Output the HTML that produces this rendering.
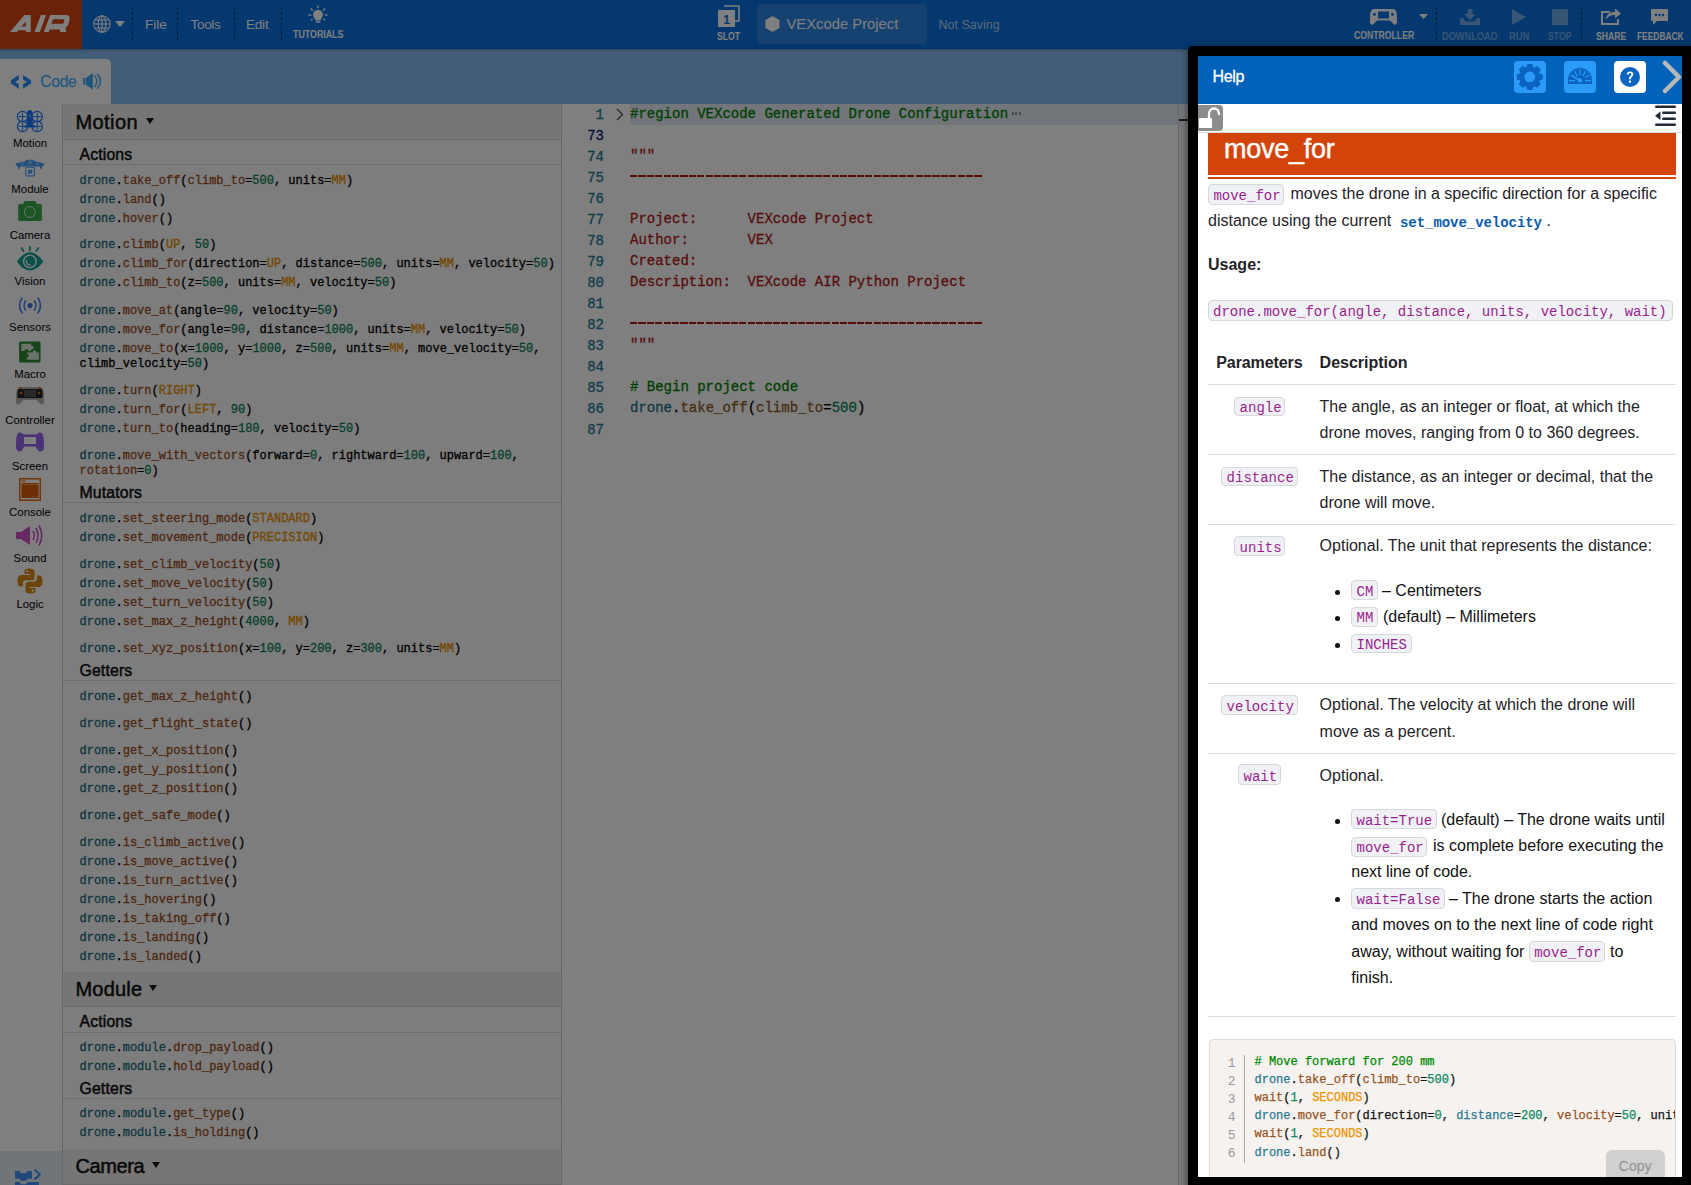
<!DOCTYPE html><html><head><meta charset="utf-8"><style>
html,body{margin:0;padding:0;}
body{width:1691px;height:1185px;overflow:hidden;position:relative;background:#fff;font-family:'Liberation Sans', sans-serif;}
</style></head><body>
<div style="position:absolute;left:0px;top:0px;width:1691px;height:49px;background:#0870de;"></div>
<div style="position:absolute;left:0px;top:0px;width:82px;height:49px;background:#d44410;"></div>
<svg style="position:absolute;left:0;top:0" width="82" height="49" viewBox="0 0 82 49">
<g fill="#ffffff" fill-rule="evenodd">
<path d="M9.9 32 L24.5 15.1 L30.7 15.1 L30.7 32 L25.8 32 L25.8 30.2 L18.3 30.2 L16.8 32 Z M21.2 26.6 L25.8 21.8 L25.8 26.6 Z"/>
<path d="M34.5 32 L40.9 15.1 L46 15.1 L39.8 32 Z"/>
<path d="M43.8 32 L50.2 15.1 L66.8 15.1 Q70.2 15.3 69.6 19.2 L68.6 23.8 Q67.9 26.6 65.6 27.4 L66.3 32 L60.1 32 L59.8 29.6 L49.6 29.6 L48.8 32 Z M53.1 19.3 L63.6 19.3 Q64.6 19.4 64.3 20.6 L63.8 22.6 Q63.5 23.7 62.4 23.7 L51.4 23.7 Z"/>
</g></svg>
<svg style="position:absolute;left:93px;top:15px" width="18" height="18" viewBox="0 0 18 18" fill="none" stroke="#fff" stroke-width="1.1">
<circle cx="9" cy="9" r="8.2"/><ellipse cx="9" cy="9" rx="3.8" ry="8.2"/><line x1="9" y1="0.8" x2="9" y2="17.2"/><line x1="0.8" y1="9" x2="17.2" y2="9"/><line x1="2" y1="5" x2="16" y2="5"/><line x1="2" y1="13" x2="16" y2="13"/></svg>
<svg style="position:absolute;left:115px;top:21px" width="10" height="6" viewBox="0 0 10 6"><path d="M0 0 L10 0 L5 6 Z" fill="#fff"/></svg>
<div style="position:absolute;left:132px;top:7px;width:1px;height:35px;background:repeating-linear-gradient(to bottom, rgba(0,0,0,0.45) 0 3px, transparent 3px 5px);"></div>
<div style="position:absolute;left:177px;top:7px;width:1px;height:35px;background:repeating-linear-gradient(to bottom, rgba(0,0,0,0.45) 0 3px, transparent 3px 5px);"></div>
<div style="position:absolute;left:234px;top:7px;width:1px;height:35px;background:repeating-linear-gradient(to bottom, rgba(0,0,0,0.45) 0 3px, transparent 3px 5px);"></div>
<div style="position:absolute;left:281px;top:7px;width:1px;height:35px;background:repeating-linear-gradient(to bottom, rgba(0,0,0,0.45) 0 3px, transparent 3px 5px);"></div>
<div style="position:absolute;left:145px;top:17.53px;font-family:'Liberation Sans', sans-serif;font-size:13.5px;line-height:13.5px;color:#fff;font-weight:normal;white-space:pre;">File</div>
<div style="position:absolute;left:190.5px;top:17.53px;font-family:'Liberation Sans', sans-serif;font-size:13.5px;line-height:13.5px;color:#fff;font-weight:normal;white-space:pre;letter-spacing:-0.3px;">Tools</div>
<div style="position:absolute;left:246px;top:17.53px;font-family:'Liberation Sans', sans-serif;font-size:13.5px;line-height:13.5px;color:#fff;font-weight:normal;white-space:pre;letter-spacing:-0.2px;">Edit</div>
<svg style="position:absolute;left:308px;top:5px" width="20" height="19" viewBox="0 0 20 19" fill="#fff">
<path d="M10 5 C6.8 5 5 7.3 5 9.8 C5 11.8 6.3 13 7.2 14 L7.2 15.5 L12.8 15.5 L12.8 14 C13.7 13 15 11.8 15 9.8 C15 7.3 13.2 5 10 5 Z"/>
<rect x="7.5" y="16.3" width="5" height="1.5" rx="0.7"/>
<rect x="9.3" y="0.5" width="1.4" height="2.8"/><rect x="0.5" y="9.3" width="2.8" height="1.4"/><rect x="16.7" y="9.3" width="2.8" height="1.4"/>
<rect x="3" y="3.2" width="1.4" height="2.6" transform="rotate(-45 3.7 4.5)"/><rect x="15.6" y="3.2" width="1.4" height="2.6" transform="rotate(45 16.3 4.5)"/>
<rect x="3" y="13.5" width="1.4" height="2.2" transform="rotate(45 3.7 14.6)"/><rect x="15.6" y="13.5" width="1.4" height="2.2" transform="rotate(-45 16.3 14.6)"/>
</svg>
<div style="position:absolute;left:293.1px;top:30.08px;font-family:'Liberation Sans', sans-serif;font-size:10px;line-height:10px;color:#fff;font-weight:bold;white-space:pre;transform:scaleX(0.884);transform-origin:0 0;">TUTORIALS</div>
<svg style="position:absolute;left:718px;top:5px" width="22" height="23" viewBox="0 0 22 23">
<path d="M6 1 L21 1 L21 16 L17 16" fill="none" stroke="#fff" stroke-width="1.6"/>
<rect x="0" y="5" width="17" height="17" fill="#fff"/>
<text x="8.5" y="19" font-family="Liberation Sans" font-weight="bold" font-size="12" text-anchor="middle" fill="#0870de">1</text></svg>
<div style="position:absolute;left:717.1px;top:32.08px;font-family:'Liberation Sans', sans-serif;font-size:10px;line-height:10px;color:#fff;font-weight:bold;white-space:pre;transform:scaleX(0.866);transform-origin:0 0;">SLOT</div>
<div style="position:absolute;left:757px;top:4px;width:170px;height:40px;background:rgba(255,255,255,0.14);border-radius:5px;"></div>
<svg style="position:absolute;left:765px;top:16px" width="15" height="16" viewBox="0 0 15 16"><path d="M7.5 0 L14.5 4 L14.5 12 L7.5 16 L0.5 12 L0.5 4 Z" fill="#fff"/></svg>
<div style="position:absolute;left:786.5px;top:17.27px;font-family:'Liberation Sans', sans-serif;font-size:14.8px;line-height:14.8px;color:#fff;font-weight:normal;white-space:pre;">VEXcode Project</div>
<div style="position:absolute;left:938.5px;top:18.84px;font-family:'Liberation Sans', sans-serif;font-size:12.5px;line-height:12.5px;color:rgba(255,255,255,0.72);font-weight:normal;white-space:pre;">Not Saving</div>
<svg style="position:absolute;left:1370px;top:8px" width="27" height="17" viewBox="0 0 27 17" fill="#fff">
<path d="M4 1 L23 1 C25 1 26.5 3 26.8 6 L27 14 C27 16 25.5 17 24 16.5 L20 12.5 L7 12.5 L3 16.5 C1.5 17 0 16 0 14 L0.2 6 C0.5 3 2 1 4 1 Z"/>
<rect x="8" y="3.5" width="11" height="7" fill="#0870de"/>
<circle cx="4.5" cy="6.5" r="1.4" fill="#0870de"/><circle cx="22.5" cy="6.5" r="1.4" fill="#0870de"/>
</svg>
<svg style="position:absolute;left:1419px;top:14px" width="9" height="5" viewBox="0 0 9 5"><path d="M0 0 L9 0 L4.5 5 Z" fill="#fff"/></svg>
<div style="position:absolute;left:1354.0px;top:31.48px;font-family:'Liberation Sans', sans-serif;font-size:10px;line-height:10px;color:#fff;font-weight:bold;white-space:pre;transform:scaleX(0.867);transform-origin:0 0;">CONTROLLER</div>
<div style="position:absolute;left:1436px;top:7px;width:1px;height:35px;background:repeating-linear-gradient(to bottom, rgba(0,0,0,0.45) 0 3px, transparent 3px 5px);"></div>
<div style="position:absolute;left:1581px;top:7px;width:1px;height:35px;background:repeating-linear-gradient(to bottom, rgba(0,0,0,0.45) 0 3px, transparent 3px 5px);"></div>
<svg style="position:absolute;left:1460px;top:9px" width="20" height="16" viewBox="0 0 20 16" fill="rgba(255,255,255,0.42)">
<path d="M7.5 0 L12.5 0 L12.5 5 L16 5 L10 11 L4 5 L7.5 5 Z"/><path d="M0 9 L3 9 L5.5 12.5 L14.5 12.5 L17 9 L20 9 L20 16 L0 16 Z"/></svg>
<div style="position:absolute;left:1442.2px;top:32.08px;font-family:'Liberation Sans', sans-serif;font-size:10px;line-height:10px;color:rgba(255,255,255,0.42);font-weight:bold;white-space:pre;transform:scaleX(0.922);transform-origin:0 0;">DOWNLOAD</div>
<svg style="position:absolute;left:1512px;top:9px" width="14" height="16" viewBox="0 0 14 16"><path d="M0 0 L14 8 L0 16 Z" fill="rgba(255,255,255,0.42)"/></svg>
<div style="position:absolute;left:1509.1px;top:32.08px;font-family:'Liberation Sans', sans-serif;font-size:10px;line-height:10px;color:rgba(255,255,255,0.42);font-weight:bold;white-space:pre;transform:scaleX(0.941);transform-origin:0 0;">RUN</div>
<div style="position:absolute;left:1552px;top:9px;width:16px;height:16px;background:rgba(255,255,255,0.42);"></div>
<div style="position:absolute;left:1548.1px;top:32.08px;font-family:'Liberation Sans', sans-serif;font-size:10px;line-height:10px;color:rgba(255,255,255,0.42);font-weight:bold;white-space:pre;transform:scaleX(0.865);transform-origin:0 0;">STOP</div>
<svg style="position:absolute;left:1601px;top:7px" width="21" height="18" viewBox="0 0 21 18" fill="none" stroke="#fff" stroke-width="2">
<path d="M9 5 L1 5 L1 17 L17 17 L17 12"/><path d="M5 13 C5 7 9 5 14 5 L14 1.5 L20 6.5 L14 11.5 L14 8 C10 8 7 9 5 13 Z" fill="#fff" stroke="none"/></svg>
<div style="position:absolute;left:1596.2px;top:32.08px;font-family:'Liberation Sans', sans-serif;font-size:10px;line-height:10px;color:#fff;font-weight:bold;white-space:pre;transform:scaleX(0.866);transform-origin:0 0;">SHARE</div>
<svg style="position:absolute;left:1651px;top:9px" width="17" height="16" viewBox="0 0 17 16">
<path d="M1 0 L16 0 C16.6 0 17 0.4 17 1 L17 11 C17 11.6 16.6 12 16 12 L6 12 L2 16 L2 12 L1 12 C0.4 12 0 11.6 0 11 L0 1 C0 0.4 0.4 0 1 0 Z" fill="#fff"/>
<circle cx="5" cy="6" r="1.2" fill="#0870de"/><circle cx="8.5" cy="6" r="1.2" fill="#0870de"/><circle cx="12" cy="6" r="1.2" fill="#0870de"/></svg>
<div style="position:absolute;left:1636.9px;top:32.08px;font-family:'Liberation Sans', sans-serif;font-size:10px;line-height:10px;color:#fff;font-weight:bold;white-space:pre;transform:scaleX(0.839);transform-origin:0 0;">FEEDBACK</div>
<div style="position:absolute;left:0px;top:49px;width:1691px;height:55px;background:#85baf0;"></div>
<div style="position:absolute;left:0px;top:49px;width:1691px;height:3px;background:linear-gradient(rgba(0,0,0,0.25),rgba(0,0,0,0));"></div>
<div style="position:absolute;left:0px;top:59px;width:111px;height:45px;background:#fff;border-radius:0 5px 0 0;"></div>
<svg style="position:absolute;left:0;top:60px" width="40" height="40" viewBox="0 60 40 40" fill="#2590fa">
<path d="M18.8 75.1 L11 80.2 L11 83.6 L18.8 88.7 L18.8 84.2 L15.1 82 L18.8 79.7 Z"/><path d="M23.1 75.1 L31 80.2 L31 83.6 L23.1 88.7 L23.1 84.2 L26.8 82 L23.1 79.7 Z"/></svg>
<div style="position:absolute;left:40.3px;top:73.53px;font-family:'Liberation Sans', sans-serif;font-size:15.6px;line-height:15.6px;color:#44b0ff;font-weight:normal;white-space:pre;letter-spacing:-0.3px;-webkit-text-stroke:0.25px #44b0ff;">Code</div>
<svg style="position:absolute;left:80px;top:70px" width="24" height="22" viewBox="80 70 24 22">
<rect x="83" y="77.9" width="2.3" height="6.9" fill="#44b0ff"/>
<path d="M85.9 77.9 L92.9 73 L92.9 89.8 L85.9 84.8 Z" fill="#40a8f8"/>
<path d="M94.9 75.9 Q98.8 81.2 94.9 86.6" fill="none" stroke="#44b0ff" stroke-width="1.6" stroke-linecap="round"/>
<path d="M97.6 74.2 Q103.2 81.2 97.6 88.3" fill="none" stroke="#44b0ff" stroke-width="1.6" stroke-linecap="round"/></svg>
<div style="position:absolute;left:0px;top:104px;width:62px;height:1081px;background:#fff;"></div>
<div style="position:absolute;left:0px;top:1151px;width:62px;height:34px;background:#e0eaf4;"></div>
<div style="position:absolute;left:0;width:60px;text-align:center;top:138.04px;font-size:11.4px;line-height:11.4px;color:#000;white-space:pre">Motion</div>
<div style="position:absolute;left:0;width:60px;text-align:center;top:183.74px;font-size:11.4px;line-height:11.4px;color:#000;white-space:pre">Module</div>
<div style="position:absolute;left:0;width:60px;text-align:center;top:229.74px;font-size:11.4px;line-height:11.4px;color:#000;white-space:pre">Camera</div>
<div style="position:absolute;left:0;width:60px;text-align:center;top:275.74px;font-size:11.4px;line-height:11.4px;color:#000;white-space:pre">Vision</div>
<div style="position:absolute;left:0;width:60px;text-align:center;top:321.74px;font-size:11.4px;line-height:11.4px;color:#000;white-space:pre">Sensors</div>
<div style="position:absolute;left:0;width:60px;text-align:center;top:368.54px;font-size:11.4px;line-height:11.4px;color:#000;white-space:pre">Macro</div>
<div style="position:absolute;left:0;width:60px;text-align:center;top:414.54px;font-size:11.4px;line-height:11.4px;color:#000;white-space:pre">Controller</div>
<div style="position:absolute;left:0;width:60px;text-align:center;top:460.54px;font-size:11.4px;line-height:11.4px;color:#000;white-space:pre">Screen</div>
<div style="position:absolute;left:0;width:60px;text-align:center;top:506.74px;font-size:11.4px;line-height:11.4px;color:#000;white-space:pre">Console</div>
<div style="position:absolute;left:0;width:60px;text-align:center;top:552.74px;font-size:11.4px;line-height:11.4px;color:#000;white-space:pre">Sound</div>
<div style="position:absolute;left:0;width:60px;text-align:center;top:598.74px;font-size:11.4px;line-height:11.4px;color:#000;white-space:pre">Logic</div>
<svg style="position:absolute;left:15px;top:108px" width="30" height="26" viewBox="15 108 30 26" fill="none" stroke="#1878ff" stroke-width="1.2">
<circle cx="22.6" cy="116.6" r="5.2"/><circle cx="37.2" cy="116.6" r="5.2"/><circle cx="22.6" cy="126.4" r="5.2"/><circle cx="37.2" cy="126.4" r="5.2"/>
<path d="M18.5 116.6 L26.7 116.6 M22.6 112.5 L22.6 120.7 M33.1 116.6 L41.3 116.6 M37.2 112.5 L37.2 120.7 M18.5 126.4 L26.7 126.4 M22.6 122.3 L22.6 130.5 M33.1 126.4 L41.3 126.4 M37.2 122.3 L37.2 130.5" stroke-width="1"/>
<path d="M29.9 110 C31.9 110 32.8 112 32.8 114 L32.8 124.5 L35.5 126 L35.5 127.6 L24.3 127.6 L24.3 126 L27 124.5 L27 114 C27 112 27.9 110 29.9 110 Z" fill="#1878ff" stroke="none"/>
<rect x="29.2" y="114.5" width="1.4" height="2.4" fill="#8ab8ff" stroke="none"/></svg>
<svg style="position:absolute;left:14px;top:157px" width="32" height="22" viewBox="14 157 32 22" fill="#4aa0f8">
<path d="M15.8 163.3 L21 162.2 L24.5 161.5 L27 159.7 L33 159.7 L35.5 161.5 L39 162.2 L43.9 163.3 L43.9 165.2 L42.2 166.2 L41.6 169.2 L40.4 169.2 L39.8 166.5 L20.2 166.5 L19.6 169.2 L18.4 169.2 L17.8 166.2 L15.8 165.2 Z"/>
<rect x="28.7" y="160.6" width="1" height="3.6" fill="#b8dcff"/><rect x="30.4" y="160.6" width="1" height="3.6" fill="#b8dcff"/>
<rect x="21.5" y="163.2" width="2.2" height="1.3" fill="#b8dcff"/><rect x="36.3" y="163.2" width="2.2" height="1.3" fill="#b8dcff"/>
<rect x="25.8" y="167.3" width="8.6" height="8.6" rx="1" fill="none" stroke="#4aa0f8" stroke-width="1.1"/>
<rect x="28" y="169.6" width="4.2" height="4.1"/></svg>
<svg style="position:absolute;left:17px;top:200px" width="26" height="22" viewBox="17 200 26 22">
<path d="M24.5 201 L35.5 201 L36.7 204 L40.3 204 Q41.8 204 41.8 205.5 L41.8 219.4 Q41.8 220.9 40.3 220.9 L19.7 220.9 Q18.2 220.9 18.2 219.4 L18.2 205.5 Q18.2 204 19.7 204 L23.3 204 Z" fill="#38a84c"/>
<circle cx="29.8" cy="212" r="5.4" fill="none" stroke="#e6f0e6" stroke-width="0.9"/><circle cx="38.3" cy="206.6" r="0.6" fill="#e6f0e6"/></svg>
<svg style="position:absolute;left:15px;top:245px" width="30" height="27" viewBox="15 245 30 27">
<g stroke="#16a090" stroke-width="1.7" stroke-linecap="round"><line x1="29.9" y1="246.5" x2="29.9" y2="250.5"/><line x1="21.5" y1="248" x2="23.5" y2="251"/><line x1="38.3" y1="248" x2="36.3" y2="251"/></g>
<path d="M16.9 261.4 Q29.9 243 43.3 261.4 Q29.9 279.8 16.9 261.4 Z" fill="#16a090"/>
<circle cx="29.9" cy="261.4" r="7" fill="#fff"/><circle cx="29.9" cy="261.4" r="5.6" fill="#16a090"/>
<path d="M26.6 260.2 A3.6 3.6 0 0 0 30.6 265" fill="none" stroke="#fff" stroke-width="1.3"/></svg>
<svg style="position:absolute;left:18px;top:297px" width="24" height="17" viewBox="0 0 24 17" fill="none" stroke="#3b7be8" stroke-width="1.6" stroke-linecap="round">
<circle cx="12" cy="8.5" r="2.6" fill="#3b7be8" stroke="none"/>
<path d="M7.5 4 C5.8 6.5 5.8 10.5 7.5 13"/><path d="M16.5 4 C18.2 6.5 18.2 10.5 16.5 13"/>
<path d="M4 1 C0.8 5 0.8 12 4 16"/><path d="M20 1 C23.2 5 23.2 12 20 16"/></svg>
<svg style="position:absolute;left:18px;top:340px" width="24" height="24" viewBox="18 340 24 24">
<rect x="19.1" y="341.5" width="21.4" height="20.9" rx="1.5" fill="#2c8a36"/>
<path d="M21.3 343.7 L31 343.7 L31 345.6 A2 2 0 1 1 31 349.4 L31 351 L28.5 351 A2 2 0 1 0 24.5 351 L21.3 351 Z" fill="#d6e6d6"/>
<path d="M26.8 352.5 L32.5 352.5 A2 2 0 1 1 36.5 352.5 L38.9 352.5 L38.9 359.8 L26.8 359.8 L26.8 357.5 A2 2 0 1 0 26.8 353.5 Z" fill="#d6e6d6"/></svg>
<svg style="position:absolute;left:16px;top:386px" width="28" height="19" viewBox="0 0 28 19">
<path d="M4 1 L24 1 C26 1 27.5 3 27.8 6.5 L28 15.5 C28 18 26 19 24.5 18 L20.5 14 L7.5 14 L3.5 18 C2 19 0 18 0 15.5 L0.2 6.5 C0.5 3 2 1 4 1 Z" fill="#b0b0b0"/>
<path d="M3 3 L25 3 C26 3 26.5 4.5 26.5 6 L26.5 12 L1.5 12 L1.5 6 C1.5 4.5 2 3 3 3 Z" fill="#222"/>
<rect x="8" y="4" width="12" height="7" fill="#555"/>
<rect x="3" y="1" width="3" height="1.5" fill="#e07020"/><rect x="22" y="1" width="3" height="1.5" fill="#e07020"/>
<circle cx="5" cy="7" r="1.3" fill="#e07020"/><circle cx="23" cy="7" r="1.3" fill="#e07020"/></svg>
<svg style="position:absolute;left:16px;top:432px" width="28" height="20" viewBox="0 0 28 20">
<path d="M4 0.5 C6 0.5 7 2.5 8.5 2.5 L19.5 2.5 C21 2.5 22 0.5 24 0.5 C26.5 0.5 27.5 3 27.8 8 L28 15 C28 18.5 26 19.5 24 19.5 C21.5 19.5 20.5 14.5 19 14.5 L9 14.5 C7.5 14.5 6.5 19.5 4 19.5 C2 19.5 0 18.5 0 15 L0.2 8 C0.5 3 1.5 0.5 4 0.5 Z" fill="#9464ec"/>
<rect x="8" y="5" width="12" height="7" fill="#fff"/></svg>
<svg style="position:absolute;left:19px;top:478px" width="22" height="23" viewBox="0 0 22 23">
<rect x="0.75" y="0.75" width="20.5" height="21.5" fill="none" stroke="#e06a10" stroke-width="1.5"/>
<rect x="2.5" y="2.5" width="4" height="1.3" fill="#e06a10"/>
<rect x="2.5" y="5" width="17" height="15" fill="#d85a08"/>
<rect x="3.5" y="6" width="15" height="1" fill="#f0a060"/><rect x="12" y="17.8" width="2.5" height="1" fill="#f0a060"/><rect x="15.5" y="17.8" width="2.5" height="1" fill="#f0a060"/></svg>
<svg style="position:absolute;left:16px;top:525px" width="27" height="21" viewBox="0 0 27 21">
<path d="M0 7 L5 7 L14 1 L14 20 L5 14 L0 14 Z" fill="#d050c8"/>
<path d="M17 6 Q19.5 10.5 17 15" fill="none" stroke="#d050c8" stroke-width="1.6"/>
<path d="M20 3 Q24 10.5 20 18" fill="none" stroke="#d050c8" stroke-width="1.6"/>
<path d="M23 0.5 Q28.5 10.5 23 20.5" fill="none" stroke="#d050c8" stroke-width="1.6"/></svg>
<svg style="position:absolute;left:17px;top:568px" width="26" height="26" viewBox="0 0 26 26">
<path d="M12.5 0.5 C7 0.5 7.5 3 7.5 3 L7.5 6 L13 6 L13 7 L4 7 C4 7 0.5 6.8 0.5 12.8 C0.5 18.8 3.7 18.5 3.7 18.5 L6 18.5 L6 15.5 C6 15.5 5.8 12.3 9 12.3 L14.5 12.3 C14.5 12.3 17.5 12.4 17.5 9.4 L17.5 3.5 C17.5 3.5 18 0.5 12.5 0.5 Z" fill="#d68a10"/>
<circle cx="10.2" cy="3.3" r="1.1" fill="#fff"/>
<path d="M13.5 25.5 C19 25.5 18.5 23 18.5 23 L18.5 20 L13 20 L13 19 L22 19 C22 19 25.5 19.2 25.5 13.2 C25.5 7.2 22.3 7.5 22.3 7.5 L20 7.5 L20 10.5 C20 10.5 20.2 13.7 17 13.7 L11.5 13.7 C11.5 13.7 8.5 13.6 8.5 16.6 L8.5 22.5 C8.5 22.5 8 25.5 13.5 25.5 Z" fill="#d68a10"/>
<circle cx="15.8" cy="22.7" r="1.1" fill="#fff"/></svg>
<svg style="position:absolute;left:10px;top:1165px" width="40" height="20" viewBox="10 1165 40 20" fill="#3e90f8">
<path d="M15 1171 L19.8 1171 L21 1173.2 L26 1173.2 L27.2 1171 L31.9 1171 L31.9 1178.8 L27.5 1178.8 L26.3 1180.8 L20.7 1180.8 L19.5 1178.8 L15 1178.8 Z"/>
<path d="M15 1182 L19.8 1182 L21 1184.2 L26 1184.2 L27.2 1182 L39 1182 L39 1190 L15 1190 Z"/>
<path d="M35.2 1170.2 L39.8 1174.5 L35.2 1178.8" fill="none" stroke="#3e90f8" stroke-width="2.2" stroke-linecap="round" stroke-linejoin="round"/></svg>
<div style="position:absolute;left:62px;top:104px;width:500px;height:1081px;background:#fbfbfb;border-left:1px solid #cfcfcf;border-right:1px solid #cfcfcf;box-sizing:border-box;"></div>
<div style="position:absolute;left:62px;top:104px;width:500px;height:36px;background:#ececec;border-left:1px solid #cfcfcf;border-right:1px solid #cfcfcf;border-bottom:1px solid #d6d6d6;box-sizing:border-box;"></div>
<div style="position:absolute;left:75.5px;top:112.05px;font-family:'Liberation Sans', sans-serif;font-size:20px;line-height:20px;color:#111;font-weight:normal;white-space:pre;-webkit-text-stroke:0.5px #111;letter-spacing:0.4px;">Motion</div>
<svg style="position:absolute;left:145.5px;top:118.30000000000001px" width="8" height="6" viewBox="0 0 8 6"><path d="M0 0 L8 0 L4 6 Z" fill="#111"/></svg>
<div style="position:absolute;left:79.5px;top:146.76px;font-family:'Liberation Sans', sans-serif;font-size:15.8px;line-height:15.8px;color:#111;font-weight:normal;white-space:pre;-webkit-text-stroke:0.5px #111;letter-spacing:0.15px;">Actions</div>
<div style="position:absolute;left:63px;top:164px;width:498px;height:1px;background:#dadada;"></div>
<div style="position:absolute;left:79.5px;top:174.60px;font-family:'Liberation Mono', monospace;font-size:12px;line-height:12px;color:#000;font-weight:normal;white-space:pre;-webkit-text-stroke-width:0.3px;"><span style="color:#1a6c7c">drone</span>.<span style="color:#9a4e1e">take_off</span>(<span style="color:#9a4e1e">climb_to</span>=<span style="color:#0a7f55">500</span>, units=<span style="color:#e89000">MM</span>)</div>
<div style="position:absolute;left:79.5px;top:193.70px;font-family:'Liberation Mono', monospace;font-size:12px;line-height:12px;color:#000;font-weight:normal;white-space:pre;-webkit-text-stroke-width:0.3px;"><span style="color:#1a6c7c">drone</span>.<span style="color:#9a4e1e">land</span>()</div>
<div style="position:absolute;left:79.5px;top:212.70px;font-family:'Liberation Mono', monospace;font-size:12px;line-height:12px;color:#000;font-weight:normal;white-space:pre;-webkit-text-stroke-width:0.3px;"><span style="color:#1a6c7c">drone</span>.<span style="color:#9a4e1e">hover</span>()</div>
<div style="position:absolute;left:79.5px;top:239.20px;font-family:'Liberation Mono', monospace;font-size:12px;line-height:12px;color:#000;font-weight:normal;white-space:pre;-webkit-text-stroke-width:0.3px;"><span style="color:#1a6c7c">drone</span>.<span style="color:#9a4e1e">climb</span>(<span style="color:#e89000">UP</span>, <span style="color:#0a7f55">50</span>)</div>
<div style="position:absolute;left:79.5px;top:258.30px;font-family:'Liberation Mono', monospace;font-size:12px;line-height:12px;color:#000;font-weight:normal;white-space:pre;-webkit-text-stroke-width:0.3px;"><span style="color:#1a6c7c">drone</span>.<span style="color:#9a4e1e">climb_for</span>(direction=<span style="color:#e89000">UP</span>, distance=<span style="color:#0a7f55">500</span>, units=<span style="color:#e89000">MM</span>, velocity=<span style="color:#0a7f55">50</span>)</div>
<div style="position:absolute;left:79.5px;top:277.30px;font-family:'Liberation Mono', monospace;font-size:12px;line-height:12px;color:#000;font-weight:normal;white-space:pre;-webkit-text-stroke-width:0.3px;"><span style="color:#1a6c7c">drone</span>.<span style="color:#9a4e1e">climb_to</span>(z=<span style="color:#0a7f55">500</span>, units=<span style="color:#e89000">MM</span>, velocity=<span style="color:#0a7f55">50</span>)</div>
<div style="position:absolute;left:79.5px;top:304.50px;font-family:'Liberation Mono', monospace;font-size:12px;line-height:12px;color:#000;font-weight:normal;white-space:pre;-webkit-text-stroke-width:0.3px;"><span style="color:#1a6c7c">drone</span>.<span style="color:#9a4e1e">move_at</span>(angle=<span style="color:#0a7f55">90</span>, velocity=<span style="color:#0a7f55">50</span>)</div>
<div style="position:absolute;left:79.5px;top:323.80px;font-family:'Liberation Mono', monospace;font-size:12px;line-height:12px;color:#000;font-weight:normal;white-space:pre;-webkit-text-stroke-width:0.3px;"><span style="color:#1a6c7c">drone</span>.<span style="color:#9a4e1e">move_for</span>(angle=<span style="color:#0a7f55">90</span>, distance=<span style="color:#0a7f55">1000</span>, units=<span style="color:#e89000">MM</span>, velocity=<span style="color:#0a7f55">50</span>)</div>
<div style="position:absolute;left:79.5px;top:342.80px;font-family:'Liberation Mono', monospace;font-size:12px;line-height:12px;color:#000;font-weight:normal;white-space:pre;-webkit-text-stroke-width:0.3px;"><span style="color:#1a6c7c">drone</span>.<span style="color:#9a4e1e">move_to</span>(x=<span style="color:#0a7f55">1000</span>, y=<span style="color:#0a7f55">1000</span>, z=<span style="color:#0a7f55">500</span>, units=<span style="color:#e89000">MM</span>, move_velocity=<span style="color:#0a7f55">50</span>,</div>
<div style="position:absolute;left:79.5px;top:357.90px;font-family:'Liberation Mono', monospace;font-size:12px;line-height:12px;color:#000;font-weight:normal;white-space:pre;-webkit-text-stroke-width:0.3px;">climb_velocity=<span style="color:#0a7f55">50</span>)</div>
<div style="position:absolute;left:79.5px;top:385.00px;font-family:'Liberation Mono', monospace;font-size:12px;line-height:12px;color:#000;font-weight:normal;white-space:pre;-webkit-text-stroke-width:0.3px;"><span style="color:#1a6c7c">drone</span>.<span style="color:#9a4e1e">turn</span>(<span style="color:#e89000">RIGHT</span>)</div>
<div style="position:absolute;left:79.5px;top:404.00px;font-family:'Liberation Mono', monospace;font-size:12px;line-height:12px;color:#000;font-weight:normal;white-space:pre;-webkit-text-stroke-width:0.3px;"><span style="color:#1a6c7c">drone</span>.<span style="color:#9a4e1e">turn_for</span>(<span style="color:#e89000">LEFT</span>, <span style="color:#0a7f55">90</span>)</div>
<div style="position:absolute;left:79.5px;top:422.70px;font-family:'Liberation Mono', monospace;font-size:12px;line-height:12px;color:#000;font-weight:normal;white-space:pre;-webkit-text-stroke-width:0.3px;"><span style="color:#1a6c7c">drone</span>.<span style="color:#9a4e1e">turn_to</span>(heading=<span style="color:#0a7f55">180</span>, velocity=<span style="color:#0a7f55">50</span>)</div>
<div style="position:absolute;left:79.5px;top:449.90px;font-family:'Liberation Mono', monospace;font-size:12px;line-height:12px;color:#000;font-weight:normal;white-space:pre;-webkit-text-stroke-width:0.3px;"><span style="color:#1a6c7c">drone</span>.<span style="color:#9a4e1e">move_with_vectors</span>(forward=<span style="color:#0a7f55">0</span>, rightward=<span style="color:#0a7f55">100</span>, upward=<span style="color:#0a7f55">100</span>,</div>
<div style="position:absolute;left:79.5px;top:465.00px;font-family:'Liberation Mono', monospace;font-size:12px;line-height:12px;color:#000;font-weight:normal;white-space:pre;-webkit-text-stroke-width:0.3px;"><span style="color:#9a4e1e">rotation</span>=<span style="color:#0a7f55">0</span>)</div>
<div style="position:absolute;left:79.5px;top:512.70px;font-family:'Liberation Mono', monospace;font-size:12px;line-height:12px;color:#000;font-weight:normal;white-space:pre;-webkit-text-stroke-width:0.3px;"><span style="color:#1a6c7c">drone</span>.<span style="color:#9a4e1e">set_steering_mode</span>(<span style="color:#e89000">STANDARD</span>)</div>
<div style="position:absolute;left:79.5px;top:531.70px;font-family:'Liberation Mono', monospace;font-size:12px;line-height:12px;color:#000;font-weight:normal;white-space:pre;-webkit-text-stroke-width:0.3px;"><span style="color:#1a6c7c">drone</span>.<span style="color:#9a4e1e">set_movement_mode</span>(<span style="color:#e89000">PRECISION</span>)</div>
<div style="position:absolute;left:79.5px;top:558.90px;font-family:'Liberation Mono', monospace;font-size:12px;line-height:12px;color:#000;font-weight:normal;white-space:pre;-webkit-text-stroke-width:0.3px;"><span style="color:#1a6c7c">drone</span>.<span style="color:#9a4e1e">set_climb_velocity</span>(<span style="color:#0a7f55">50</span>)</div>
<div style="position:absolute;left:79.5px;top:577.90px;font-family:'Liberation Mono', monospace;font-size:12px;line-height:12px;color:#000;font-weight:normal;white-space:pre;-webkit-text-stroke-width:0.3px;"><span style="color:#1a6c7c">drone</span>.<span style="color:#9a4e1e">set_move_velocity</span>(<span style="color:#0a7f55">50</span>)</div>
<div style="position:absolute;left:79.5px;top:596.60px;font-family:'Liberation Mono', monospace;font-size:12px;line-height:12px;color:#000;font-weight:normal;white-space:pre;-webkit-text-stroke-width:0.3px;"><span style="color:#1a6c7c">drone</span>.<span style="color:#9a4e1e">set_turn_velocity</span>(<span style="color:#0a7f55">50</span>)</div>
<div style="position:absolute;left:79.5px;top:615.60px;font-family:'Liberation Mono', monospace;font-size:12px;line-height:12px;color:#000;font-weight:normal;white-space:pre;-webkit-text-stroke-width:0.3px;"><span style="color:#1a6c7c">drone</span>.<span style="color:#9a4e1e">set_max_z_height</span>(<span style="color:#0a7f55">4000</span>, <span style="color:#e89000">MM</span>)</div>
<div style="position:absolute;left:79.5px;top:642.70px;font-family:'Liberation Mono', monospace;font-size:12px;line-height:12px;color:#000;font-weight:normal;white-space:pre;-webkit-text-stroke-width:0.3px;"><span style="color:#1a6c7c">drone</span>.<span style="color:#9a4e1e">set_xyz_position</span>(x=<span style="color:#0a7f55">100</span>, y=<span style="color:#0a7f55">200</span>, z=<span style="color:#0a7f55">300</span>, units=<span style="color:#e89000">MM</span>)</div>
<div style="position:absolute;left:79.5px;top:691.00px;font-family:'Liberation Mono', monospace;font-size:12px;line-height:12px;color:#000;font-weight:normal;white-space:pre;-webkit-text-stroke-width:0.3px;"><span style="color:#1a6c7c">drone</span>.<span style="color:#9a4e1e">get_max_z_height</span>()</div>
<div style="position:absolute;left:79.5px;top:717.80px;font-family:'Liberation Mono', monospace;font-size:12px;line-height:12px;color:#000;font-weight:normal;white-space:pre;-webkit-text-stroke-width:0.3px;"><span style="color:#1a6c7c">drone</span>.<span style="color:#9a4e1e">get_flight_state</span>()</div>
<div style="position:absolute;left:79.5px;top:744.80px;font-family:'Liberation Mono', monospace;font-size:12px;line-height:12px;color:#000;font-weight:normal;white-space:pre;-webkit-text-stroke-width:0.3px;"><span style="color:#1a6c7c">drone</span>.<span style="color:#9a4e1e">get_x_position</span>()</div>
<div style="position:absolute;left:79.5px;top:763.80px;font-family:'Liberation Mono', monospace;font-size:12px;line-height:12px;color:#000;font-weight:normal;white-space:pre;-webkit-text-stroke-width:0.3px;"><span style="color:#1a6c7c">drone</span>.<span style="color:#9a4e1e">get_y_position</span>()</div>
<div style="position:absolute;left:79.5px;top:782.80px;font-family:'Liberation Mono', monospace;font-size:12px;line-height:12px;color:#000;font-weight:normal;white-space:pre;-webkit-text-stroke-width:0.3px;"><span style="color:#1a6c7c">drone</span>.<span style="color:#9a4e1e">get_z_position</span>()</div>
<div style="position:absolute;left:79.5px;top:809.90px;font-family:'Liberation Mono', monospace;font-size:12px;line-height:12px;color:#000;font-weight:normal;white-space:pre;-webkit-text-stroke-width:0.3px;"><span style="color:#1a6c7c">drone</span>.<span style="color:#9a4e1e">get_safe_mode</span>()</div>
<div style="position:absolute;left:79.5px;top:836.80px;font-family:'Liberation Mono', monospace;font-size:12px;line-height:12px;color:#000;font-weight:normal;white-space:pre;-webkit-text-stroke-width:0.3px;"><span style="color:#1a6c7c">drone</span>.<span style="color:#9a4e1e">is_climb_active</span>()</div>
<div style="position:absolute;left:79.5px;top:855.80px;font-family:'Liberation Mono', monospace;font-size:12px;line-height:12px;color:#000;font-weight:normal;white-space:pre;-webkit-text-stroke-width:0.3px;"><span style="color:#1a6c7c">drone</span>.<span style="color:#9a4e1e">is_move_active</span>()</div>
<div style="position:absolute;left:79.5px;top:874.80px;font-family:'Liberation Mono', monospace;font-size:12px;line-height:12px;color:#000;font-weight:normal;white-space:pre;-webkit-text-stroke-width:0.3px;"><span style="color:#1a6c7c">drone</span>.<span style="color:#9a4e1e">is_turn_active</span>()</div>
<div style="position:absolute;left:79.5px;top:893.80px;font-family:'Liberation Mono', monospace;font-size:12px;line-height:12px;color:#000;font-weight:normal;white-space:pre;-webkit-text-stroke-width:0.3px;"><span style="color:#1a6c7c">drone</span>.<span style="color:#9a4e1e">is_hovering</span>()</div>
<div style="position:absolute;left:79.5px;top:912.80px;font-family:'Liberation Mono', monospace;font-size:12px;line-height:12px;color:#000;font-weight:normal;white-space:pre;-webkit-text-stroke-width:0.3px;"><span style="color:#1a6c7c">drone</span>.<span style="color:#9a4e1e">is_taking_off</span>()</div>
<div style="position:absolute;left:79.5px;top:931.80px;font-family:'Liberation Mono', monospace;font-size:12px;line-height:12px;color:#000;font-weight:normal;white-space:pre;-webkit-text-stroke-width:0.3px;"><span style="color:#1a6c7c">drone</span>.<span style="color:#9a4e1e">is_landing</span>()</div>
<div style="position:absolute;left:79.5px;top:950.80px;font-family:'Liberation Mono', monospace;font-size:12px;line-height:12px;color:#000;font-weight:normal;white-space:pre;-webkit-text-stroke-width:0.3px;"><span style="color:#1a6c7c">drone</span>.<span style="color:#9a4e1e">is_landed</span>()</div>
<div style="position:absolute;left:79.5px;top:1041.70px;font-family:'Liberation Mono', monospace;font-size:12px;line-height:12px;color:#000;font-weight:normal;white-space:pre;-webkit-text-stroke-width:0.3px;"><span style="color:#1a6c7c">drone</span>.<span style="color:#1a6c7c">module</span>.<span style="color:#9a4e1e">drop_payload</span>()</div>
<div style="position:absolute;left:79.5px;top:1060.50px;font-family:'Liberation Mono', monospace;font-size:12px;line-height:12px;color:#000;font-weight:normal;white-space:pre;-webkit-text-stroke-width:0.3px;"><span style="color:#1a6c7c">drone</span>.<span style="color:#1a6c7c">module</span>.<span style="color:#9a4e1e">hold_payload</span>()</div>
<div style="position:absolute;left:79.5px;top:1108.40px;font-family:'Liberation Mono', monospace;font-size:12px;line-height:12px;color:#000;font-weight:normal;white-space:pre;-webkit-text-stroke-width:0.3px;"><span style="color:#1a6c7c">drone</span>.<span style="color:#1a6c7c">module</span>.<span style="color:#9a4e1e">get_type</span>()</div>
<div style="position:absolute;left:79.5px;top:1127.20px;font-family:'Liberation Mono', monospace;font-size:12px;line-height:12px;color:#000;font-weight:normal;white-space:pre;-webkit-text-stroke-width:0.3px;"><span style="color:#1a6c7c">drone</span>.<span style="color:#1a6c7c">module</span>.<span style="color:#9a4e1e">is_holding</span>()</div>
<div style="position:absolute;left:79.5px;top:485.26px;font-family:'Liberation Sans', sans-serif;font-size:15.8px;line-height:15.8px;color:#111;font-weight:normal;white-space:pre;-webkit-text-stroke:0.5px #111;letter-spacing:0.15px;">Mutators</div>
<div style="position:absolute;left:63px;top:502.4px;width:498px;height:1px;background:#dadada;"></div>
<div style="position:absolute;left:79.5px;top:662.96px;font-family:'Liberation Sans', sans-serif;font-size:15.8px;line-height:15.8px;color:#111;font-weight:normal;white-space:pre;-webkit-text-stroke:0.5px #111;letter-spacing:0.15px;">Getters</div>
<div style="position:absolute;left:63px;top:680.4px;width:498px;height:1px;background:#dadada;"></div>
<div style="position:absolute;left:62px;top:972px;width:500px;height:35px;background:#ececec;border-left:1px solid #cfcfcf;border-right:1px solid #cfcfcf;border-bottom:1px solid #d6d6d6;box-sizing:border-box;"></div>
<div style="position:absolute;left:75.5px;top:979.05px;font-family:'Liberation Sans', sans-serif;font-size:20px;line-height:20px;color:#111;font-weight:normal;white-space:pre;-webkit-text-stroke:0.5px #111;letter-spacing:0.2px;">Module</div>
<svg style="position:absolute;left:148.5px;top:985.3px" width="8" height="6" viewBox="0 0 8 6"><path d="M0 0 L8 0 L4 6 Z" fill="#111"/></svg>
<div style="position:absolute;left:79.5px;top:1014.16px;font-family:'Liberation Sans', sans-serif;font-size:15.8px;line-height:15.8px;color:#111;font-weight:normal;white-space:pre;-webkit-text-stroke:0.5px #111;letter-spacing:0.15px;">Actions</div>
<div style="position:absolute;left:63px;top:1031.5px;width:498px;height:1px;background:#dadada;"></div>
<div style="position:absolute;left:79.5px;top:1080.86px;font-family:'Liberation Sans', sans-serif;font-size:15.8px;line-height:15.8px;color:#111;font-weight:normal;white-space:pre;-webkit-text-stroke:0.5px #111;letter-spacing:0.15px;">Getters</div>
<div style="position:absolute;left:63px;top:1098.3px;width:498px;height:1px;background:#dadada;"></div>
<div style="position:absolute;left:62px;top:1149px;width:500px;height:36px;background:#ececec;border-left:1px solid #cfcfcf;border-right:1px solid #cfcfcf;border-bottom:1px solid #d6d6d6;box-sizing:border-box;"></div>
<div style="position:absolute;left:75.5px;top:1156.05px;font-family:'Liberation Sans', sans-serif;font-size:20px;line-height:20px;color:#111;font-weight:normal;white-space:pre;-webkit-text-stroke:0.5px #111;letter-spacing:-0.4px;">Camera</div>
<svg style="position:absolute;left:152px;top:1162.3px" width="8" height="6" viewBox="0 0 8 6"><path d="M0 0 L8 0 L4 6 Z" fill="#111"/></svg>
<div style="position:absolute;left:562px;top:104px;width:1129px;height:1081px;background:#fff;"></div>
<div style="position:absolute;left:1179px;top:104px;width:20px;height:1081px;background:#ececec;"></div>
<div style="position:absolute;left:630px;top:104px;width:570px;height:21px;background:#e4ebf5;"></div>
<div style="position:absolute;left:1178px;top:104px;width:1px;height:1081px;background:#cccccc;"></div>
<div style="position:absolute;left:1179px;top:119px;width:12px;height:2px;background:#333;"></div>
<div style="position:absolute;left:570px;width:34px;text-align:right;top:107.90px;font-family:'Liberation Mono', monospace;font-size:14px;line-height:14px;color:#237893;white-space:pre;-webkit-text-stroke-width:0.3px">1</div>
<div style="position:absolute;left:630px;top:107.00px;font-family:'Liberation Mono', monospace;font-size:14px;line-height:14px;color:#000;font-weight:normal;white-space:pre;-webkit-text-stroke-width:0.3px;"><span style="color:#008000">#region VEXcode Generated Drone Configuration</span></div>
<div style="position:absolute;left:570px;width:34px;text-align:right;top:128.90px;font-family:'Liberation Mono', monospace;font-size:14px;line-height:14px;color:#0b216f;white-space:pre;-webkit-text-stroke-width:0.3px">73</div>
<div style="position:absolute;left:570px;width:34px;text-align:right;top:149.90px;font-family:'Liberation Mono', monospace;font-size:14px;line-height:14px;color:#237893;white-space:pre;-webkit-text-stroke-width:0.3px">74</div>
<div style="position:absolute;left:630px;top:149.00px;font-family:'Liberation Mono', monospace;font-size:14px;line-height:14px;color:#000;font-weight:normal;white-space:pre;-webkit-text-stroke-width:0.3px;"><span style="color:#b01818">&quot;&quot;&quot;</span></div>
<div style="position:absolute;left:570px;width:34px;text-align:right;top:170.90px;font-family:'Liberation Mono', monospace;font-size:14px;line-height:14px;color:#237893;white-space:pre;-webkit-text-stroke-width:0.3px">75</div>
<div style="position:absolute;left:570px;width:34px;text-align:right;top:191.90px;font-family:'Liberation Mono', monospace;font-size:14px;line-height:14px;color:#237893;white-space:pre;-webkit-text-stroke-width:0.3px">76</div>
<div style="position:absolute;left:570px;width:34px;text-align:right;top:212.90px;font-family:'Liberation Mono', monospace;font-size:14px;line-height:14px;color:#237893;white-space:pre;-webkit-text-stroke-width:0.3px">77</div>
<div style="position:absolute;left:630px;top:212.00px;font-family:'Liberation Mono', monospace;font-size:14px;line-height:14px;color:#000;font-weight:normal;white-space:pre;-webkit-text-stroke-width:0.3px;"><span style="color:#b01818">Project:      VEXcode Project</span></div>
<div style="position:absolute;left:570px;width:34px;text-align:right;top:233.90px;font-family:'Liberation Mono', monospace;font-size:14px;line-height:14px;color:#237893;white-space:pre;-webkit-text-stroke-width:0.3px">78</div>
<div style="position:absolute;left:630px;top:233.00px;font-family:'Liberation Mono', monospace;font-size:14px;line-height:14px;color:#000;font-weight:normal;white-space:pre;-webkit-text-stroke-width:0.3px;"><span style="color:#b01818">Author:       VEX</span></div>
<div style="position:absolute;left:570px;width:34px;text-align:right;top:254.90px;font-family:'Liberation Mono', monospace;font-size:14px;line-height:14px;color:#237893;white-space:pre;-webkit-text-stroke-width:0.3px">79</div>
<div style="position:absolute;left:630px;top:254.00px;font-family:'Liberation Mono', monospace;font-size:14px;line-height:14px;color:#000;font-weight:normal;white-space:pre;-webkit-text-stroke-width:0.3px;"><span style="color:#b01818">Created:</span></div>
<div style="position:absolute;left:570px;width:34px;text-align:right;top:275.90px;font-family:'Liberation Mono', monospace;font-size:14px;line-height:14px;color:#237893;white-space:pre;-webkit-text-stroke-width:0.3px">80</div>
<div style="position:absolute;left:630px;top:275.00px;font-family:'Liberation Mono', monospace;font-size:14px;line-height:14px;color:#000;font-weight:normal;white-space:pre;-webkit-text-stroke-width:0.3px;"><span style="color:#b01818">Description:  VEXcode AIR Python Project</span></div>
<div style="position:absolute;left:570px;width:34px;text-align:right;top:296.90px;font-family:'Liberation Mono', monospace;font-size:14px;line-height:14px;color:#237893;white-space:pre;-webkit-text-stroke-width:0.3px">81</div>
<div style="position:absolute;left:570px;width:34px;text-align:right;top:317.90px;font-family:'Liberation Mono', monospace;font-size:14px;line-height:14px;color:#237893;white-space:pre;-webkit-text-stroke-width:0.3px">82</div>
<div style="position:absolute;left:570px;width:34px;text-align:right;top:338.90px;font-family:'Liberation Mono', monospace;font-size:14px;line-height:14px;color:#237893;white-space:pre;-webkit-text-stroke-width:0.3px">83</div>
<div style="position:absolute;left:630px;top:338.00px;font-family:'Liberation Mono', monospace;font-size:14px;line-height:14px;color:#000;font-weight:normal;white-space:pre;-webkit-text-stroke-width:0.3px;"><span style="color:#b01818">&quot;&quot;&quot;</span></div>
<div style="position:absolute;left:570px;width:34px;text-align:right;top:359.90px;font-family:'Liberation Mono', monospace;font-size:14px;line-height:14px;color:#237893;white-space:pre;-webkit-text-stroke-width:0.3px">84</div>
<div style="position:absolute;left:570px;width:34px;text-align:right;top:380.90px;font-family:'Liberation Mono', monospace;font-size:14px;line-height:14px;color:#237893;white-space:pre;-webkit-text-stroke-width:0.3px">85</div>
<div style="position:absolute;left:630px;top:380.00px;font-family:'Liberation Mono', monospace;font-size:14px;line-height:14px;color:#000;font-weight:normal;white-space:pre;-webkit-text-stroke-width:0.3px;"><span style="color:#008000"># Begin project code</span></div>
<div style="position:absolute;left:570px;width:34px;text-align:right;top:401.90px;font-family:'Liberation Mono', monospace;font-size:14px;line-height:14px;color:#237893;white-space:pre;-webkit-text-stroke-width:0.3px">86</div>
<div style="position:absolute;left:630px;top:401.00px;font-family:'Liberation Mono', monospace;font-size:14px;line-height:14px;color:#000;font-weight:normal;white-space:pre;-webkit-text-stroke-width:0.3px;"><span style="color:#1f6f86">drone</span>.<span style="color:#8a5a24">take_off</span>(<span style="color:#8a5a24">climb_to</span>=<span style="color:#098658">500</span>)</div>
<div style="position:absolute;left:570px;width:34px;text-align:right;top:422.90px;font-family:'Liberation Mono', monospace;font-size:14px;line-height:14px;color:#237893;white-space:pre;-webkit-text-stroke-width:0.3px">87</div>
<div style="position:absolute;left:630px;top:175.3px;width:352.8px;height:2.1px;background:repeating-linear-gradient(to right,#b01818 0 7.2px,transparent 7.2px 8.4px)"></div>
<div style="position:absolute;left:630px;top:322.3px;width:352.8px;height:2.1px;background:repeating-linear-gradient(to right,#b01818 0 7.2px,transparent 7.2px 8.4px)"></div>
<svg style="position:absolute;left:616px;top:108px" width="8" height="13" viewBox="0 0 8 13"><path d="M1 1 L6.5 6.5 L1 12" fill="none" stroke="#424242" stroke-width="1.2"/></svg>
<div style="position:absolute;left:1012px;top:112px;width:9px;height:3px;background:repeating-linear-gradient(to right,#999 0 2px,transparent 2px 3.5px)"></div>
<div style="position:absolute;left:0px;top:0px;width:1691px;height:1185px;background:rgba(0,0,0,0.5);"></div>
<div style="position:absolute;left:1188px;top:46px;width:513px;height:1149px;background:#000;border-radius:5px 0 0 0;box-shadow:-2px 0 5px rgba(0,0,0,0.35);"></div>
<div style="position:absolute;left:1198px;top:56px;width:484px;height:1121px;background:#fff;overflow:hidden;"></div>
<div style="position:absolute;left:1198px;top:56px;width:484px;height:48px;background:#0062b9;"></div>
<div style="position:absolute;left:1212.5px;top:68.80px;font-family:'Liberation Sans', sans-serif;font-size:16px;line-height:16px;color:#fff;font-weight:normal;white-space:pre;letter-spacing:-0.3px;-webkit-text-stroke:0.3px #fff;">Help</div>
<div style="position:absolute;left:1514px;top:61px;width:32px;height:32px;background:#2b9bf8;border-radius:4px;"></div>
<svg style="position:absolute;left:1514px;top:61px" width="32" height="32" viewBox="1514 61 32 32">
<path d="M1525.90 67.90 L1527.30 63.90 L1532.30 63.90 L1533.70 67.90 L1533.41 67.78 L1537.22 65.94 L1540.76 69.48 L1538.92 73.29 L1538.80 73.00 L1542.80 74.40 L1542.80 79.40 L1538.80 80.80 L1538.92 80.51 L1540.76 84.32 L1537.22 87.86 L1533.41 86.02 L1533.70 85.90 L1532.30 89.90 L1527.30 89.90 L1525.90 85.90 L1526.19 86.02 L1522.38 87.86 L1518.84 84.32 L1520.68 80.51 L1520.80 80.80 L1516.80 79.40 L1516.80 74.40 L1520.80 73.00 L1520.68 73.29 L1518.84 69.48 L1522.38 65.94 L1526.19 67.78 Z" fill="#0a64c0"/><circle cx="1529.8" cy="76.9" r="10" fill="#0a64c0"/><circle cx="1529.8" cy="76.9" r="5.3" fill="#2b9bf8"/></svg>
<div style="position:absolute;left:1564px;top:61px;width:32px;height:32px;background:#2b9bf8;border-radius:4px;"></div>
<svg style="position:absolute;left:1564px;top:61px" width="32" height="32" viewBox="1564 61 32 32">
<path d="M1568 84.1 L1568 80 A12 12 0 0 1 1592 80 L1592 84.1 Z" fill="#0a64c0"/>
<g stroke="#2b9bf8" stroke-width="1.3" stroke-linecap="round">
<line x1="1569.5" y1="80.6" x2="1574.5" y2="80.6"/><line x1="1585.5" y1="80.6" x2="1590.5" y2="80.6"/>
<line x1="1580" y1="70" x2="1580" y2="74.5"/><line x1="1574.8" y1="71.5" x2="1576.8" y2="75.5"/><line x1="1585.2" y1="71.5" x2="1583.2" y2="75.5"/>
<line x1="1589.5" y1="75.2" x2="1585.7" y2="77.3"/>
<line x1="1571.5" y1="75.5" x2="1580" y2="80.5" stroke-width="1.5"/></g>
<circle cx="1580" cy="80.4" r="2.1" fill="#2b9bf8"/></svg>
<div style="position:absolute;left:1614px;top:61px;width:32px;height:32px;background:#fff;border-radius:4px;"></div>
<svg style="position:absolute;left:1620px;top:67px" width="20" height="20" viewBox="0 0 20 20">
<circle cx="10" cy="10" r="10" fill="#0a64c0"/>
<path d="M6.8 7.6 C6.8 5.6 8.2 4.4 10.1 4.4 C12 4.4 13.4 5.6 13.4 7.3 C13.4 9.5 10.9 9.7 10.9 11.8 L10.9 12.3 L9 12.3 L9 11.6 C9 9 11.3 8.8 11.3 7.4 C11.3 6.6 10.8 6.1 10.1 6.1 C9.3 6.1 8.8 6.7 8.8 7.6 Z" fill="#fff"/>
<rect x="8.9" y="13.6" width="2.1" height="2.1" fill="#fff"/></svg>
<svg style="position:absolute;left:1662px;top:60px" width="22" height="34" viewBox="0 0 22 34"><path d="M3 3 L17 17 L3 31" fill="none" stroke="#b8b8b8" stroke-width="4.5" stroke-linecap="round" stroke-linejoin="round"/></svg>
<div style="position:absolute;left:1198px;top:132px;width:484px;height:1px;background:#d5dbe2;"></div>
<div style="position:absolute;left:1198px;top:105px;width:25px;height:26px;background:#8c8c8c;border-radius:0 4px 4px 0;"></div>
<svg style="position:absolute;left:1199px;top:107px" width="22" height="22" viewBox="0 0 22 22">
<rect x="0" y="11" width="13" height="10" rx="1" fill="#fff"/>
<path d="M10 11 L10 7 C10 3.5 12.3 1.5 15 1.5 C17.7 1.5 20 3.5 20 7" fill="none" stroke="#fff" stroke-width="2.3" stroke-linecap="round"/></svg>
<svg style="position:absolute;left:1654px;top:105px" width="23" height="22" viewBox="0 0 23 22" fill="#232b36">
<rect x="1" y="0.5" width="21" height="2.6" rx="1.3"/><rect x="8" y="6.5" width="14" height="2.6" rx="1.3"/><rect x="8" y="12.5" width="14" height="2.6" rx="1.3"/><rect x="1" y="18.5" width="21" height="2.6" rx="1.3"/>
<path d="M1 10.8 L6.5 6.5 L6.5 15.1 Z"/></svg>
<div style="position:absolute;left:1208px;top:133px;width:468px;height:42px;background:#d2440a;"></div>
<div style="position:absolute;left:1224px;top:136.06px;font-family:'Liberation Sans', sans-serif;font-size:27px;line-height:27px;color:#fff;font-weight:normal;white-space:pre;letter-spacing:-0.25px;-webkit-text-stroke:0.45px #fff;">move_for</div>
<div style="position:absolute;left:1208px;top:177px;width:468px;height:2px;background:#d2440a;"></div>
<div style="position:absolute;left:1208.2px;top:184.4px;width:76.2px;height:20.19999999999999px;background:#eff1f4;border:1px solid #d5d9de;border-radius:4px;box-sizing:border-box;"></div>
<div style="position:absolute;left:1213.4px;top:189.00px;font-family:'Liberation Mono', monospace;font-size:14px;line-height:14px;color:#9a1f8e;font-weight:normal;white-space:pre;">move_for</div>
<div style="position:absolute;left:1290.5px;top:186.00px;font-family:'Liberation Sans', sans-serif;font-size:16px;line-height:16px;color:#1f2328;font-weight:normal;white-space:pre;">moves the drone in a specific direction for a specific</div>
<div style="position:absolute;left:1208px;top:213.20px;font-family:'Liberation Sans', sans-serif;font-size:16px;line-height:16px;color:#1f2328;font-weight:normal;white-space:pre;">distance using the current</div>
<div style="position:absolute;left:1400px;top:215.90px;font-family:'Liberation Mono', monospace;font-size:14px;line-height:14px;color:#0a5cb0;font-weight:bold;white-space:pre;letter-spacing:-0.05px;">set_move_velocity</div>
<div style="position:absolute;left:1546.5px;top:213.20px;font-family:'Liberation Sans', sans-serif;font-size:16px;line-height:16px;color:#1f2328;font-weight:normal;white-space:pre;">.</div>
<div style="position:absolute;left:1208px;top:257.20px;font-family:'Liberation Sans', sans-serif;font-size:16px;line-height:16px;color:#1f2328;font-weight:bold;white-space:pre;">Usage:</div>
<div style="position:absolute;left:1208px;top:300.4px;width:464.6px;height:20.3px;background:#eff1f4;border:1px solid #d5d9de;border-radius:4px;box-sizing:border-box;"></div>
<div style="position:absolute;left:1213px;top:305.00px;font-family:'Liberation Mono', monospace;font-size:14px;line-height:14px;color:#9a1f8e;font-weight:normal;white-space:pre;">drone.move_for(angle, distance, units, velocity, wait)</div>
<div style="position:absolute;left:1216.3px;top:355.40px;font-family:'Liberation Sans', sans-serif;font-size:16px;line-height:16px;color:#1f2328;font-weight:bold;white-space:pre;letter-spacing:-0.1px;">Parameters</div>
<div style="position:absolute;left:1319.6px;top:355.40px;font-family:'Liberation Sans', sans-serif;font-size:16px;line-height:16px;color:#1f2328;font-weight:bold;white-space:pre;">Description</div>
<div style="position:absolute;left:1208px;top:384px;width:468px;height:1px;background:#d8dee4;"></div>
<div style="position:absolute;left:1208px;top:454px;width:468px;height:1px;background:#d8dee4;"></div>
<div style="position:absolute;left:1208px;top:524px;width:468px;height:1px;background:#d8dee4;"></div>
<div style="position:absolute;left:1208px;top:683px;width:468px;height:1px;background:#d8dee4;"></div>
<div style="position:absolute;left:1208px;top:753px;width:468px;height:1px;background:#d8dee4;"></div>
<div style="position:absolute;left:1208px;top:1016px;width:468px;height:1px;background:#d8dee4;"></div>
<div style="position:absolute;left:1234.4px;top:396.5px;width:51.1px;height:19.69999999999999px;background:#eff1f4;border:1px solid #d5d9de;border-radius:4px;box-sizing:border-box;"></div>
<div style="position:absolute;left:1239.6000000000001px;top:401.00px;font-family:'Liberation Mono', monospace;font-size:14px;line-height:14px;color:#9a1f8e;font-weight:normal;white-space:pre;">angle</div>
<div style="position:absolute;left:1319.6px;top:398.60px;font-family:'Liberation Sans', sans-serif;font-size:16px;line-height:16px;color:#1f2328;font-weight:normal;white-space:pre;">The angle, as an integer or float, at which the</div>
<div style="position:absolute;left:1319.6px;top:425.00px;font-family:'Liberation Sans', sans-serif;font-size:16px;line-height:16px;color:#1f2328;font-weight:normal;white-space:pre;">drone moves, ranging from 0 to 360 degrees.</div>
<div style="position:absolute;left:1221.4px;top:466.7px;width:76.2px;height:19.600000000000023px;background:#eff1f4;border:1px solid #d5d9de;border-radius:4px;box-sizing:border-box;"></div>
<div style="position:absolute;left:1226.6000000000001px;top:471.10px;font-family:'Liberation Mono', monospace;font-size:14px;line-height:14px;color:#9a1f8e;font-weight:normal;white-space:pre;">distance</div>
<div style="position:absolute;left:1319.6px;top:468.80px;font-family:'Liberation Sans', sans-serif;font-size:16px;line-height:16px;color:#1f2328;font-weight:normal;white-space:pre;">The distance, as an integer or decimal, that the</div>
<div style="position:absolute;left:1319.6px;top:495.00px;font-family:'Liberation Sans', sans-serif;font-size:16px;line-height:16px;color:#1f2328;font-weight:normal;white-space:pre;">drone will move.</div>
<div style="position:absolute;left:1234.4px;top:535.7px;width:51.1px;height:20.59999999999991px;background:#eff1f4;border:1px solid #d5d9de;border-radius:4px;box-sizing:border-box;"></div>
<div style="position:absolute;left:1239.6000000000001px;top:540.50px;font-family:'Liberation Mono', monospace;font-size:14px;line-height:14px;color:#9a1f8e;font-weight:normal;white-space:pre;">units</div>
<div style="position:absolute;left:1319.6px;top:538.00px;font-family:'Liberation Sans', sans-serif;font-size:16px;line-height:16px;color:#1f2328;font-weight:normal;white-space:pre;">Optional. The unit that represents the distance:</div>
<div style="position:absolute;left:1335px;top:589.7px;width:5px;height:5px;border-radius:50%;background:#111"></div>
<div style="position:absolute;left:1351.3px;top:580.4px;width:26.3px;height:20.0px;background:#eff1f4;border:1px solid #d5d9de;border-radius:4px;box-sizing:border-box;"></div>
<div style="position:absolute;left:1356.5px;top:585.20px;font-family:'Liberation Mono', monospace;font-size:14px;line-height:14px;color:#9a1f8e;font-weight:normal;white-space:pre;">CM</div>
<div style="position:absolute;left:1382px;top:583.20px;font-family:'Liberation Sans', sans-serif;font-size:16px;line-height:16px;color:#111;font-weight:normal;white-space:pre;">– Centimeters</div>
<div style="position:absolute;left:1335px;top:615.5px;width:5px;height:5px;border-radius:50%;background:#111"></div>
<div style="position:absolute;left:1351.3px;top:606.7px;width:26.3px;height:20.59999999999991px;background:#eff1f4;border:1px solid #d5d9de;border-radius:4px;box-sizing:border-box;"></div>
<div style="position:absolute;left:1356.5px;top:611.30px;font-family:'Liberation Mono', monospace;font-size:14px;line-height:14px;color:#9a1f8e;font-weight:normal;white-space:pre;">MM</div>
<div style="position:absolute;left:1383px;top:609.00px;font-family:'Liberation Sans', sans-serif;font-size:16px;line-height:16px;color:#111;font-weight:normal;white-space:pre;">(default) – Millimeters</div>
<div style="position:absolute;left:1335px;top:642.5px;width:5px;height:5px;border-radius:50%;background:#111"></div>
<div style="position:absolute;left:1351.3px;top:633.6px;width:60.5px;height:19.699999999999932px;background:#eff1f4;border:1px solid #d5d9de;border-radius:4px;box-sizing:border-box;"></div>
<div style="position:absolute;left:1356.5px;top:638.10px;font-family:'Liberation Mono', monospace;font-size:14px;line-height:14px;color:#9a1f8e;font-weight:normal;white-space:pre;">INCHES</div>
<div style="position:absolute;left:1221.4px;top:695.3px;width:76.2px;height:20.200000000000045px;background:#eff1f4;border:1px solid #d5d9de;border-radius:4px;box-sizing:border-box;"></div>
<div style="position:absolute;left:1226.6000000000001px;top:699.90px;font-family:'Liberation Mono', monospace;font-size:14px;line-height:14px;color:#9a1f8e;font-weight:normal;white-space:pre;">velocity</div>
<div style="position:absolute;left:1319.6px;top:697.40px;font-family:'Liberation Sans', sans-serif;font-size:16px;line-height:16px;color:#1f2328;font-weight:normal;white-space:pre;">Optional. The velocity at which the drone will</div>
<div style="position:absolute;left:1319.6px;top:723.70px;font-family:'Liberation Sans', sans-serif;font-size:16px;line-height:16px;color:#1f2328;font-weight:normal;white-space:pre;">move as a percent.</div>
<div style="position:absolute;left:1238.3px;top:764.2px;width:42.3px;height:21.199999999999932px;background:#eff1f4;border:1px solid #d5d9de;border-radius:4px;box-sizing:border-box;"></div>
<div style="position:absolute;left:1243.5px;top:769.70px;font-family:'Liberation Mono', monospace;font-size:14px;line-height:14px;color:#9a1f8e;font-weight:normal;white-space:pre;">wait</div>
<div style="position:absolute;left:1319.6px;top:767.50px;font-family:'Liberation Sans', sans-serif;font-size:16px;line-height:16px;color:#1f2328;font-weight:normal;white-space:pre;">Optional.</div>
<div style="position:absolute;left:1335px;top:818.5px;width:5px;height:5px;border-radius:50%;background:#111"></div>
<div style="position:absolute;left:1351.3px;top:809.3px;width:85.3px;height:20.200000000000045px;background:#eff1f4;border:1px solid #d5d9de;border-radius:4px;box-sizing:border-box;"></div>
<div style="position:absolute;left:1356.5px;top:814.30px;font-family:'Liberation Mono', monospace;font-size:14px;line-height:14px;color:#9a1f8e;font-weight:normal;white-space:pre;">wait=True</div>
<div style="position:absolute;left:1441px;top:812.00px;font-family:'Liberation Sans', sans-serif;font-size:16px;line-height:16px;color:#111;font-weight:normal;white-space:pre;">(default) – The drone waits until</div>
<div style="position:absolute;left:1351.3px;top:836.5px;width:76.2px;height:20.200000000000045px;background:#eff1f4;border:1px solid #d5d9de;border-radius:4px;box-sizing:border-box;"></div>
<div style="position:absolute;left:1356.5px;top:841.10px;font-family:'Liberation Mono', monospace;font-size:14px;line-height:14px;color:#9a1f8e;font-weight:normal;white-space:pre;">move_for</div>
<div style="position:absolute;left:1433px;top:838.30px;font-family:'Liberation Sans', sans-serif;font-size:16px;line-height:16px;color:#111;font-weight:normal;white-space:pre;">is complete before executing the</div>
<div style="position:absolute;left:1351.3px;top:864.30px;font-family:'Liberation Sans', sans-serif;font-size:16px;line-height:16px;color:#111;font-weight:normal;white-space:pre;">next line of code.</div>
<div style="position:absolute;left:1335px;top:897.0px;width:5px;height:5px;border-radius:50%;background:#111"></div>
<div style="position:absolute;left:1351.3px;top:888.4px;width:93.8px;height:20.600000000000023px;background:#eff1f4;border:1px solid #d5d9de;border-radius:4px;box-sizing:border-box;"></div>
<div style="position:absolute;left:1356.5px;top:893.10px;font-family:'Liberation Mono', monospace;font-size:14px;line-height:14px;color:#9a1f8e;font-weight:normal;white-space:pre;">wait=False</div>
<div style="position:absolute;left:1449px;top:890.50px;font-family:'Liberation Sans', sans-serif;font-size:16px;line-height:16px;color:#111;font-weight:normal;white-space:pre;">– The drone starts the action</div>
<div style="position:absolute;left:1351.3px;top:916.80px;font-family:'Liberation Sans', sans-serif;font-size:16px;line-height:16px;color:#111;font-weight:normal;white-space:pre;">and moves on to the next line of code right</div>
<div style="position:absolute;left:1351.3px;top:944.00px;font-family:'Liberation Sans', sans-serif;font-size:16px;line-height:16px;color:#111;font-weight:normal;white-space:pre;">away, without waiting for</div>
<div style="position:absolute;left:1529px;top:941.3px;width:76.2px;height:20.300000000000068px;background:#eff1f4;border:1px solid #d5d9de;border-radius:4px;box-sizing:border-box;"></div>
<div style="position:absolute;left:1534.2px;top:946.30px;font-family:'Liberation Mono', monospace;font-size:14px;line-height:14px;color:#9a1f8e;font-weight:normal;white-space:pre;">move_for</div>
<div style="position:absolute;left:1610px;top:944.00px;font-family:'Liberation Sans', sans-serif;font-size:16px;line-height:16px;color:#111;font-weight:normal;white-space:pre;">to</div>
<div style="position:absolute;left:1351.3px;top:969.70px;font-family:'Liberation Sans', sans-serif;font-size:16px;line-height:16px;color:#111;font-weight:normal;white-space:pre;">finish.</div>
<div style="position:absolute;left:1208.5px;top:1039px;width:467.5px;height:160px;background:#f5f2f0;border:1px solid #dcdcdc;border-radius:4px;box-sizing:border-box;overflow:hidden">
<div style="position:absolute;left:6px;width:20px;text-align:right;top:16.85px;font-family:'Liberation Mono', monospace;font-size:13px;line-height:13px;color:#9a9a9a;white-space:pre">1</div>
<div style="position:absolute;left:45px;top:16.00px;font-family:'Liberation Mono', monospace;font-size:12px;line-height:12px;color:#111;white-space:pre;-webkit-text-stroke-width:0.25px"><span style="color:#008a00"># Move forward for 200 mm</span></div>
<div style="position:absolute;left:6px;width:20px;text-align:right;top:34.97px;font-family:'Liberation Mono', monospace;font-size:13px;line-height:13px;color:#9a9a9a;white-space:pre">2</div>
<div style="position:absolute;left:45px;top:34.12px;font-family:'Liberation Mono', monospace;font-size:12px;line-height:12px;color:#111;white-space:pre;-webkit-text-stroke-width:0.25px"><span style="color:#2a7a90">drone</span>.<span style="color:#955424">take_off</span>(<span style="color:#955424">climb_to</span>=<span style="color:#0d8a62">500</span>)</div>
<div style="position:absolute;left:6px;width:20px;text-align:right;top:53.09px;font-family:'Liberation Mono', monospace;font-size:13px;line-height:13px;color:#9a9a9a;white-space:pre">3</div>
<div style="position:absolute;left:45px;top:52.24px;font-family:'Liberation Mono', monospace;font-size:12px;line-height:12px;color:#111;white-space:pre;-webkit-text-stroke-width:0.25px"><span style="color:#955424">wait</span>(<span style="color:#0d8a62">1</span>, <span style="color:#ee9500">SECONDS</span>)</div>
<div style="position:absolute;left:6px;width:20px;text-align:right;top:71.21px;font-family:'Liberation Mono', monospace;font-size:13px;line-height:13px;color:#9a9a9a;white-space:pre">4</div>
<div style="position:absolute;left:45px;top:70.36px;font-family:'Liberation Mono', monospace;font-size:12px;line-height:12px;color:#111;white-space:pre;-webkit-text-stroke-width:0.25px"><span style="color:#2a7a90">drone</span>.<span style="color:#955424">move_for</span>(direction=<span style="color:#0d8a62">0</span>, <span style="color:#2a7a90">distance</span>=<span style="color:#0d8a62">200</span>, <span style="color:#955424">velocity</span>=<span style="color:#0d8a62">50</span>, units=<span style="color:#ee9500">MM</span>)</div>
<div style="position:absolute;left:6px;width:20px;text-align:right;top:89.33px;font-family:'Liberation Mono', monospace;font-size:13px;line-height:13px;color:#9a9a9a;white-space:pre">5</div>
<div style="position:absolute;left:45px;top:88.48px;font-family:'Liberation Mono', monospace;font-size:12px;line-height:12px;color:#111;white-space:pre;-webkit-text-stroke-width:0.25px"><span style="color:#955424">wait</span>(<span style="color:#0d8a62">1</span>, <span style="color:#ee9500">SECONDS</span>)</div>
<div style="position:absolute;left:6px;width:20px;text-align:right;top:107.45px;font-family:'Liberation Mono', monospace;font-size:13px;line-height:13px;color:#9a9a9a;white-space:pre">6</div>
<div style="position:absolute;left:45px;top:106.60px;font-family:'Liberation Mono', monospace;font-size:12px;line-height:12px;color:#111;white-space:pre;-webkit-text-stroke-width:0.25px"><span style="color:#2a7a90">drone</span>.<span style="color:#955424">land</span>()</div>
<div style="position:absolute;left:34.5px;top:14.5px;width:1px;height:108px;background:#aaa"></div>
</div>
<div style="position:absolute;left:1606px;top:1150px;width:59px;height:40px;background:#d0d0d0;border-radius:6px;"></div>
<div style="position:absolute;left:1618.8px;top:1159.33px;font-family:'Liberation Sans', sans-serif;font-size:14px;line-height:14px;color:#8f8f8f;font-weight:normal;white-space:pre;">Copy</div>
<div style="position:absolute;left:1188px;top:1177px;width:503px;height:8px;background:#000;"></div>
<div style="position:absolute;left:1682px;top:46px;width:9px;height:1139px;background:#000;"></div>
</body></html>
